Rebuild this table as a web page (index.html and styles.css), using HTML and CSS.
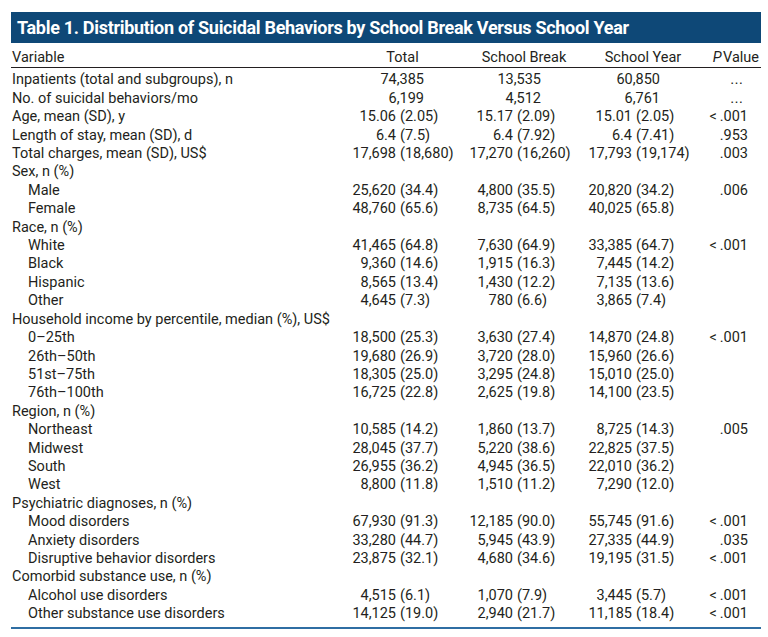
FILE: index.html
```html
<!DOCTYPE html>
<html lang="en">
<head>
<meta charset="utf-8">
<title>Table 1</title>
<link rel="stylesheet" href="styles.css">
</head>
<body>
<div class="table">
  <div class="title">Table 1. Distribution of Suicidal Behaviors by School Break Versus School Year</div>
  <div class="row head">
    <div class="lab">Variable</div>
    <div class="hd hd-total">Total</div>
    <div class="hd">School Break</div>
    <div class="hd">School Year</div>
    <div class="hd hd-p"><i>P</i>&#8202;Value</div>
  </div>
  <div class="body">
    <div class="row"><div class="lab">Inpatients (total and subgroups), n</div><div class="solo">74,385</div><div class="solo">13,535</div><div class="solo">60,850</div><div class="pv ell">…</div></div>
    <div class="row"><div class="lab">No. of suicidal behaviors/mo</div><div class="solo">6,199</div><div class="solo">4,512</div><div class="solo">6,761</div><div class="pv ell">…</div></div>
    <div class="row"><div class="lab">Age, mean (SD), y</div><div class="num"><span class="n">15.06</span><span class="p">(2.05)</span></div><div class="num"><span class="n">15.17</span><span class="p">(2.09)</span></div><div class="num"><span class="n">15.01</span><span class="p">(2.05)</span></div><div class="pv">&lt;&#8201;.001</div></div>
    <div class="row"><div class="lab">Length of stay, mean (SD), d</div><div class="num"><span class="n">6.4</span><span class="p">(7.5)</span></div><div class="num"><span class="n">6.4</span><span class="p">(7.92)</span></div><div class="num"><span class="n">6.4</span><span class="p">(7.41)</span></div><div class="pv">.953</div></div>
    <div class="row"><div class="lab">Total charges, mean (SD), US$</div><div class="num"><span class="n">17,698</span><span class="p">(18,680)</span></div><div class="num"><span class="n">17,270</span><span class="p">(16,260)</span></div><div class="num"><span class="n">17,793</span><span class="p">(19,174)</span></div><div class="pv">.003</div></div>

    <div class="row"><div class="lab">Sex, n (%)</div></div>
    <div class="row"><div class="lab sub">Male</div><div class="num"><span class="n">25,620</span><span class="p">(34.4)</span></div><div class="num"><span class="n">4,800</span><span class="p">(35.5)</span></div><div class="num"><span class="n">20,820</span><span class="p">(34.2)</span></div><div class="pv">.006</div></div>
    <div class="row"><div class="lab sub">Female</div><div class="num"><span class="n">48,760</span><span class="p">(65.6)</span></div><div class="num"><span class="n">8,735</span><span class="p">(64.5)</span></div><div class="num"><span class="n">40,025</span><span class="p">(65.8)</span></div><div class="pv"></div></div>

    <div class="row"><div class="lab">Race, n (%)</div></div>
    <div class="row"><div class="lab sub">White</div><div class="num"><span class="n">41,465</span><span class="p">(64.8)</span></div><div class="num"><span class="n">7,630</span><span class="p">(64.9)</span></div><div class="num"><span class="n">33,385</span><span class="p">(64.7)</span></div><div class="pv">&lt;&#8201;.001</div></div>
    <div class="row"><div class="lab sub">Black</div><div class="num"><span class="n">9,360</span><span class="p">(14.6)</span></div><div class="num"><span class="n">1,915</span><span class="p">(16.3)</span></div><div class="num"><span class="n">7,445</span><span class="p">(14.2)</span></div><div class="pv"></div></div>
    <div class="row"><div class="lab sub">Hispanic</div><div class="num"><span class="n">8,565</span><span class="p">(13.4)</span></div><div class="num"><span class="n">1,430</span><span class="p">(12.2)</span></div><div class="num"><span class="n">7,135</span><span class="p">(13.6)</span></div><div class="pv"></div></div>
    <div class="row"><div class="lab sub">Other</div><div class="num"><span class="n">4,645</span><span class="p">(7.3)</span></div><div class="num"><span class="n">780</span><span class="p">(6.6)</span></div><div class="num"><span class="n">3,865</span><span class="p">(7.4)</span></div><div class="pv"></div></div>

    <div class="row"><div class="lab wide">Household income by percentile, median (%), US$</div></div>
    <div class="row"><div class="lab sub">0–25th</div><div class="num"><span class="n">18,500</span><span class="p">(25.3)</span></div><div class="num"><span class="n">3,630</span><span class="p">(27.4)</span></div><div class="num"><span class="n">14,870</span><span class="p">(24.8)</span></div><div class="pv">&lt;&#8201;.001</div></div>
    <div class="row"><div class="lab sub">26th–50th</div><div class="num"><span class="n">19,680</span><span class="p">(26.9)</span></div><div class="num"><span class="n">3,720</span><span class="p">(28.0)</span></div><div class="num"><span class="n">15,960</span><span class="p">(26.6)</span></div><div class="pv"></div></div>
    <div class="row"><div class="lab sub">51st–75th</div><div class="num"><span class="n">18,305</span><span class="p">(25.0)</span></div><div class="num"><span class="n">3,295</span><span class="p">(24.8)</span></div><div class="num"><span class="n">15,010</span><span class="p">(25.0)</span></div><div class="pv"></div></div>
    <div class="row"><div class="lab sub">76th–100th</div><div class="num"><span class="n">16,725</span><span class="p">(22.8)</span></div><div class="num"><span class="n">2,625</span><span class="p">(19.8)</span></div><div class="num"><span class="n">14,100</span><span class="p">(23.5)</span></div><div class="pv"></div></div>

    <div class="row"><div class="lab">Region, n (%)</div></div>
    <div class="row"><div class="lab sub">Northeast</div><div class="num"><span class="n">10,585</span><span class="p">(14.2)</span></div><div class="num"><span class="n">1,860</span><span class="p">(13.7)</span></div><div class="num"><span class="n">8,725</span><span class="p">(14.3)</span></div><div class="pv">.005</div></div>
    <div class="row"><div class="lab sub">Midwest</div><div class="num"><span class="n">28,045</span><span class="p">(37.7)</span></div><div class="num"><span class="n">5,220</span><span class="p">(38.6)</span></div><div class="num"><span class="n">22,825</span><span class="p">(37.5)</span></div><div class="pv"></div></div>
    <div class="row"><div class="lab sub">South</div><div class="num"><span class="n">26,955</span><span class="p">(36.2)</span></div><div class="num"><span class="n">4,945</span><span class="p">(36.5)</span></div><div class="num"><span class="n">22,010</span><span class="p">(36.2)</span></div><div class="pv"></div></div>
    <div class="row"><div class="lab sub">West</div><div class="num"><span class="n">8,800</span><span class="p">(11.8)</span></div><div class="num"><span class="n">1,510</span><span class="p">(11.2)</span></div><div class="num"><span class="n">7,290</span><span class="p">(12.0)</span></div><div class="pv"></div></div>

    <div class="row"><div class="lab">Psychiatric diagnoses, n (%)</div></div>
    <div class="row"><div class="lab sub">Mood disorders</div><div class="num"><span class="n">67,930</span><span class="p">(91.3)</span></div><div class="num"><span class="n">12,185</span><span class="p">(90.0)</span></div><div class="num"><span class="n">55,745</span><span class="p">(91.6)</span></div><div class="pv">&lt;&#8201;.001</div></div>
    <div class="row"><div class="lab sub">Anxiety disorders</div><div class="num"><span class="n">33,280</span><span class="p">(44.7)</span></div><div class="num"><span class="n">5,945</span><span class="p">(43.9)</span></div><div class="num"><span class="n">27,335</span><span class="p">(44.9)</span></div><div class="pv">.035</div></div>
    <div class="row"><div class="lab sub">Disruptive behavior disorders</div><div class="num"><span class="n">23,875</span><span class="p">(32.1)</span></div><div class="num"><span class="n">4,680</span><span class="p">(34.6)</span></div><div class="num"><span class="n">19,195</span><span class="p">(31.5)</span></div><div class="pv">&lt;&#8201;.001</div></div>

    <div class="row"><div class="lab">Comorbid substance use, n (%)</div></div>
    <div class="row"><div class="lab sub">Alcohol use disorders</div><div class="num"><span class="n">4,515</span><span class="p">(6.1)</span></div><div class="num"><span class="n">1,070</span><span class="p">(7.9)</span></div><div class="num"><span class="n">3,445</span><span class="p">(5.7)</span></div><div class="pv">&lt;&#8201;.001</div></div>
    <div class="row"><div class="lab sub">Other substance use disorders</div><div class="num"><span class="n">14,125</span><span class="p">(19.0)</span></div><div class="num"><span class="n">2,940</span><span class="p">(21.7)</span></div><div class="num"><span class="n">11,185</span><span class="p">(18.4)</span></div><div class="pv">&lt;&#8201;.001</div></div>
  </div>
</div>
</body>
</html>
```

FILE: styles.css
```css
* {
  box-sizing: border-box;
}

body {
  margin: 0;
  background: #ffffff;
  color: #231f20;
  font-family: Roboto, "Liberation Sans", sans-serif;
}

.table {
  width: 750px;
  margin: 12px 0 0 11px;
}

.title {
  height: 31px;
  background: #0e4877;
  color: #ffffff;
  font-weight: 700;
  font-size: 18px;
  letter-spacing: -0.3px;
  padding-left: 6px;
  display: flex;
  align-items: center;
}

.row {
  display: grid;
  grid-template-columns: 329px 117px 119px 120px 65px;
  font-size: 14.5px;
  line-height: 18.4px;
  white-space: nowrap;
}

.head {
  margin-top: 6px;
  border-bottom: 1px solid #231f20;
}

.body {
  padding-top: 3px;
  padding-bottom: 3px;
  border-bottom: 2px solid #2f6ea3;
}

.lab {
  padding-left: 1px;
}

.lab.sub {
  padding-left: 17px;
}

.lab.wide {
  grid-column: 1 / -1;
}

.hd {
  width: 134px;
  text-align: center;
}

.hd-total {
  width: 125px;
}

.hd-p {
  width: auto;
  text-align: right;
  padding-right: 2px;
}

.num {
  display: flex;
}

.n {
  width: 56px;
  text-align: right;
}

.p {
  margin-left: 4px;
}

.solo {
  width: 84px;
  text-align: right;
}

.pv {
  text-align: right;
  padding-right: 13px;
}

.pv.ell {
  padding-right: 18px;
  font-family: "DejaVu Sans", sans-serif;
  font-size: 13px;
}
```
